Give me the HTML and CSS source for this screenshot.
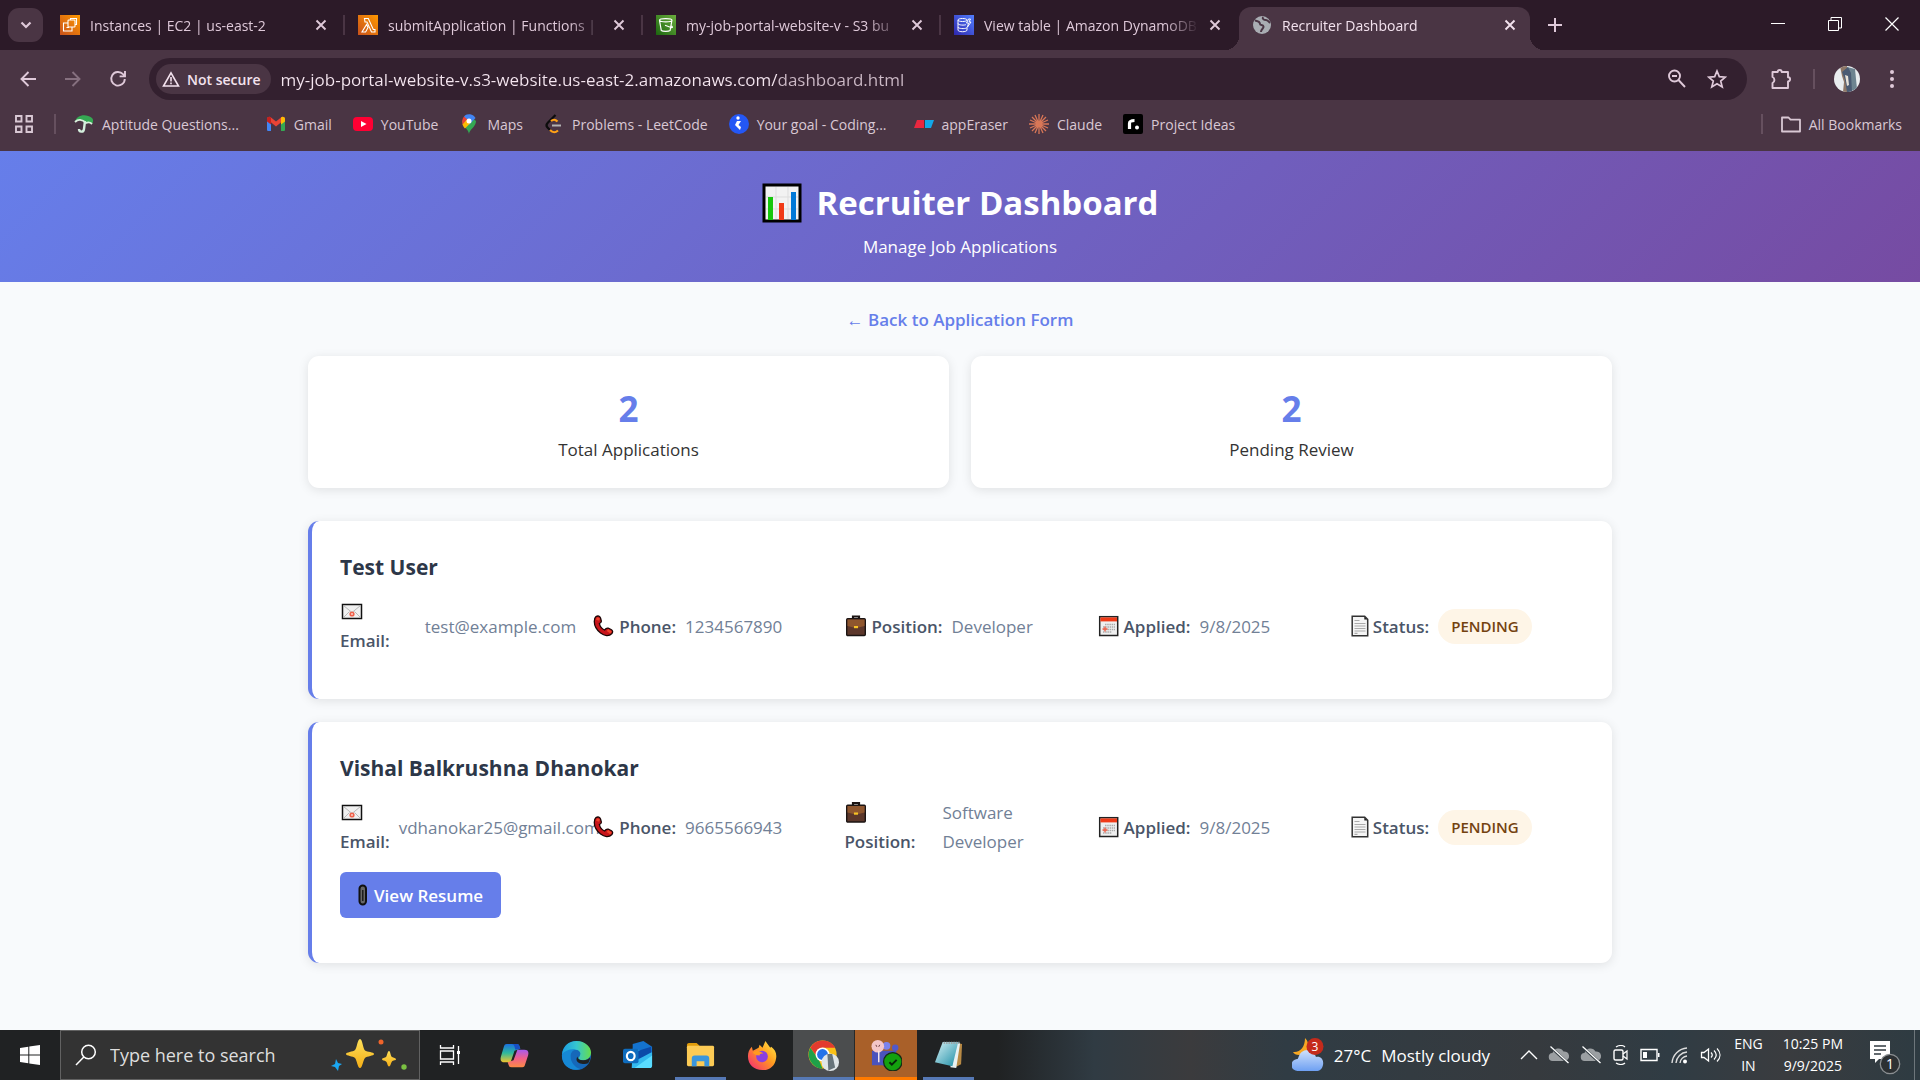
FILE: index.html
```html
<!DOCTYPE html>
<html lang="en">
<head>
<meta charset="utf-8">
<title>Recruiter Dashboard</title>
<meta name="viewport" content="width=device-width, initial-scale=1">
<link rel="stylesheet" href="styles.css">
</head>
<body>
<svg class="defs" aria-hidden="true">
  <defs>
    <linearGradient id="g-orange" x1="0" y1="1" x2="1" y2="0"><stop offset="0" stop-color="#c8511b"/><stop offset="1" stop-color="#ff9900"/></linearGradient>
    <linearGradient id="g-green" x1="0" y1="1" x2="1" y2="0"><stop offset="0" stop-color="#1b660f"/><stop offset="1" stop-color="#6cae3e"/></linearGradient>
    <linearGradient id="g-blue" x1="0" y1="1" x2="1" y2="0"><stop offset="0" stop-color="#2e27ad"/><stop offset="1" stop-color="#527fff"/></linearGradient>
    <linearGradient id="g-star" x1="0" y1="0" x2="0" y2="1"><stop offset="0" stop-color="#fde05a"/><stop offset="1" stop-color="#f5ae16"/></linearGradient>
    <linearGradient id="g-cop1" x1="0" y1="0" x2="0" y2="1"><stop offset="0" stop-color="#1a6fe0"/><stop offset=".5" stop-color="#2fb99c"/><stop offset="1" stop-color="#f2c52c"/></linearGradient>
    <linearGradient id="g-cop2" x1="0" y1="0" x2="0" y2="1"><stop offset="0" stop-color="#a55af0"/><stop offset=".5" stop-color="#f0608a"/><stop offset="1" stop-color="#fb8a45"/></linearGradient>
    <linearGradient id="g-edge" x1="0" y1="0" x2="1" y2="0"><stop offset="0" stop-color="#1b9de2"/><stop offset=".5" stop-color="#36c6cf"/><stop offset="1" stop-color="#66de4c"/></linearGradient>
    <linearGradient id="g-fox" x1="1" y1="0" x2="0" y2="1"><stop offset="0" stop-color="#fff04a"/><stop offset=".45" stop-color="#ff9a1f"/><stop offset="1" stop-color="#f5207e"/></linearGradient>
    <linearGradient id="g-note" x1="0" y1="0" x2="1" y2="1"><stop offset="0" stop-color="#d5f1f5"/><stop offset="1" stop-color="#1d8ea6"/></linearGradient>
    <linearGradient id="g-cloud" x1="0" y1="0" x2="0" y2="1"><stop offset="0" stop-color="#cfe1fc"/><stop offset="1" stop-color="#6ea0f2"/></linearGradient>
  </defs>
  <symbol id="i-close" viewBox="0 0 12 12"><path d="M1.5 1.5l9 9M10.500 1.500l-9 9" stroke="currentColor" stroke-width="1.900" fill="none"/></symbol>
  <symbol id="i-mail" viewBox="0 0 24 22"><rect x="2.500" y="4" width="19" height="14" fill="#f1f1f1" stroke="#111" stroke-width="1.500"/><path d="M3.500 5l8.500 7 8.500-7M3.500 17l6-6M20.500 17l-6-6" fill="none" stroke="#b9b9b9"/><circle cx="12" cy="13.500" r="2.600" fill="#f0614a"/><circle cx="12" cy="13.500" r="1" fill="#f9cfc8"/></symbol>
  <symbol id="i-phone" viewBox="0 0 24 22"><path d="M4 1.600c2-1.200 4-.5 4.600 1.600l.7 2.600c.3 1.500-.8 2.200-1.900 2.700.5 2.800 2.500 5.300 5.200 6.500 1-1.300 2-2.400 3.600-1.800l2.900 1.300c1.800.9 1.900 2.700.8 4-2.800 3-7.500 2.600-11.300-.4C4.600 14.900 2.300 10.700 2.300 6.500c0-2 .4-3.900 1.700-4.900z" fill="#c8151b" stroke="#1b0505" stroke-width="1.300"/><path d="M4.500 3.500l3 1M15.500 15l3.500 2.500" stroke="#f1432a" stroke-width="2.500"/></symbol>
  <symbol id="i-case" viewBox="0 0 24 22"><path d="M9 4V1.500h6V4" fill="none" stroke="#1b1413" stroke-width="2.200"/><rect x="2.700" y="3.700" width="18.600" height="16.800" rx="1" fill="#5c372b" stroke="#1b1413" stroke-width="1.400"/><path d="M3.500 4.500h17V11l-6 1.500h-5L3.500 11z" fill="#8e562e"/><rect x="10" y="11" width="4" height="2.200" fill="#f7c325"/></symbol>
  <symbol id="i-cal" viewBox="0 0 24 22"><rect x="2.700" y="1.700" width="18" height="18.800" fill="#efefef" stroke="#222" stroke-width="1.500"/><path d="M3.400 2.400h16.600v4H3.400z" fill="#f03a17"/><path d="M8 9.500h10M6 12h12M6 14.500h12M6 17h9" stroke="#aaa" stroke-width="1.500" stroke-dasharray="1.500 .7"/><path d="M5.500 14h5M8 11.500v5" stroke="#f0614a" stroke-width="1.400"/></symbol>
  <symbol id="i-page" viewBox="0 0 20 22"><path d="M2.700 1.200h12.500l3 3v16.600H2.700z" fill="#f5f5f5" stroke="#333" stroke-width="1.500"/><path d="M5 5.500h5M5 8.500h11M5 11h11M5 13.500h11M5 16h11M5 18.300h3" stroke="#aaa" stroke-width="1.200"/><path d="M14.800 1.500v3h3z" fill="#222"/></symbol>
  <symbol id="i-cloudoff" viewBox="0 0 22 20"><path d="M5 16a4 4 0 0 1-.5-8A6 6 0 0 1 15.500 6.500 4.800 4.800 0 0 1 17 16z" fill="#9b9fa2"/><path d="M2.500 2l17.500 16" stroke="#30393f" stroke-width="2.500"/><path d="M2.500 1.500l18 16.500" stroke="#fff" stroke-width="1.300"/></symbol>
</svg>

<header class="browser">
  <div class="tabstrip">
    <button class="tab-search" aria-label="Search tabs"><svg width="12" height="8" viewBox="0 0 12 8"><path d="M1.500 1.500L6 6l4.500-4.500" fill="none" stroke="currentColor" stroke-width="2.200"/></svg></button>
    <div class="tabs">
      <div class="tab">
        <svg class="fav" viewBox="0 0 20 20"><path fill="url(#g-orange)" d="M0 0h20v20H0z"/><g fill="none" stroke="#fff" stroke-width="1.100"><rect x="8" y="5" width="7" height="7" rx=".8"/><path d="M10.500 5V3.500H16.500V9.500H15M8 8H3.500v8H12v-4M6.500 12.500h2.500"/></g></svg>
        <button class="tab-title">Instances | EC2 | us-east-2</button><button class="tab-close" aria-label="Close tab"><svg><use href="#i-close"/></svg></button>
      </div>
      <div class="tab">
        <svg class="fav" viewBox="0 0 20 20"><path fill="url(#g-orange)" d="M0 0h20v20H0z"/><path d="M6.500 3.500h3.800l5 11h1.700V17h-3.500L9 7 7 7zM8.600 9.500l1.400 3L7.600 17H4z" fill="none" stroke="#fff" stroke-width="1.100"/></svg>
        <button class="tab-title">submitApplication | Functions |</button><button class="tab-close" aria-label="Close tab"><svg><use href="#i-close"/></svg></button>
      </div>
      <div class="tab">
        <svg class="fav" viewBox="0 0 20 20"><path fill="url(#g-green)" d="M0 0h20v20H0z"/><path d="M3.500 5.500l1.800 10c1.500 1.300 7.300 1.300 8.800 0l1.800-10M3.500 5.300c0-2.200 12.500-2.200 12.500 0s-12.500 2.200-12.500 0zM9 10.300l6 2.200c2.500.6 1-1.200.5-1.500" fill="none" stroke="#fff" stroke-width="1.200"/></svg>
        <button class="tab-title">my-job-portal-website-v - S3 bu</button><button class="tab-close" aria-label="Close tab"><svg><use href="#i-close"/></svg></button>
      </div>
      <div class="tab">
        <svg class="fav" viewBox="0 0 20 20"><path fill="url(#g-blue)" d="M0 0h20v20H0z"/><path d="M4 5v10c0 2.300 9 2.300 9 0v-3M4 5c0-2 9-2 9 0s-9 2-9 0zM4 8.500c0 1.800 7 2 8 1M4 12c0 1.800 7 2 8.500 1M14.500 4l-2 4h2l-1 4 3.500-5h-2l1.500-3z" fill="none" stroke="#fff"/></svg>
        <button class="tab-title">View table | Amazon DynamoDB</button><button class="tab-close" aria-label="Close tab"><svg><use href="#i-close"/></svg></button>
      </div>
      <div class="tab active">
        <svg class="fav" viewBox="0 0 20 20"><circle cx="10" cy="10" r="9" fill="#a9adb3"/><path d="M3 5.500c3 .5 5 1 5 3.500 0 1.500 3 .5 3.500 2.500S9 14 9 17M11 2c-1 2 1 3 3 3s3 2 4 3" fill="none" stroke="#4a3544" stroke-width="2"/></svg>
        <button class="tab-title">Recruiter Dashboard</button><button class="tab-close" aria-label="Close tab"><svg><use href="#i-close"/></svg></button>
      </div>
    </div>
    <button class="new-tab" aria-label="New tab"><svg width="14" height="14" viewBox="0 0 14 14"><path d="M7 0v14M0 7h14" stroke="currentColor" stroke-width="2"/></svg></button>
    <div class="window-buttons">
      <button aria-label="Minimize"><svg width="14" height="14" viewBox="0 0 14 14"><path d="M0 6.500h14" stroke="#fff"/></svg></button>
      <button aria-label="Restore"><svg width="14" height="14" viewBox="0 0 14 14"><path d="M.5 3.500h10v10H.5zM3 3.500v-3h10.500v10.500H11" fill="none" stroke="#fff"/></svg></button>
      <button aria-label="Close window"><svg width="14" height="14" viewBox="0 0 14 14"><path d="M.5.5l13 13M13.500.5l-13 13" stroke="#fff" stroke-width="1.200"/></svg></button>
    </div>
  </div>

  <div class="toolbar">
    <button aria-label="Back"><svg width="16" height="16" viewBox="0 0 16 16"><path d="M16 8H1.500M8.500 1L1.500 8l7 7" fill="none" stroke="currentColor" stroke-width="1.900"/></svg></button>
    <button class="dim" aria-label="Forward"><svg width="16" height="16" viewBox="0 0 16 16"><path d="M0 8h14.500M7.500 1l7 7-7 7" fill="none" stroke="currentColor" stroke-width="1.900"/></svg></button>
    <button aria-label="Reload"><svg width="18" height="18" viewBox="0 0 18 18"><path d="M15.800 9A6.800 6.800 0 1 1 14 4.200l2 2M16 1v5.400h-5.400" fill="none" stroke="currentColor" stroke-width="1.900"/></svg></button>
    <div class="omnibox">
      <button class="chip"><svg width="18" height="16" viewBox="0 0 18 16"><path d="M9 1.800L16.500 15h-15z" fill="none" stroke="currentColor" stroke-width="1.600"/><path d="M9 6v4.500M9 11.600v1.700" stroke="currentColor" stroke-width="1.600"/></svg>Not secure</button>
      <input class="url" type="text" aria-label="Address" value="my-job-portal-website-v.s3-website.us-east-2.amazonaws.com/dashboard.html">
      <button aria-label="Zoom"><svg width="20" height="20" viewBox="0 0 20 20"><circle cx="7.500" cy="7" r="5.500" fill="none" stroke="currentColor" stroke-width="1.900"/><path d="M5 7h5M11.500 11l6.500 7" stroke="currentColor" stroke-width="1.900"/></svg></button>
      <button aria-label="Bookmark this tab"><svg width="20" height="20" viewBox="0 0 20 20"><path d="M10 2l2.300 5.600 6 .5-4.600 3.900 1.500 5.900L10 14.700 4.800 17.900 6.300 12 1.700 8.100l6-.5z" fill="none" stroke="currentColor" stroke-width="1.700"/></svg></button>
    </div>
    <button class="ext" aria-label="Extensions"><svg width="22" height="22" viewBox="0 0 22 22"><path d="M2.500 4h5.200a2 2 0 0 1 4 0h6.300v5.200a2 2 0 0 1 0 4.200V20H2.500v-5a3.300 3.300 0 0 0 0-6z" fill="none" stroke="currentColor" stroke-width="1.900" stroke-linejoin="round"/></svg></button>
    <span class="rule"></span>
    <button class="profile" aria-label="Profile"><svg width="26" height="26" viewBox="0 0 26 26"><clipPath id="av"><circle cx="13" cy="13" r="13"/></clipPath><g clip-path="url(#av)"><path fill="#e9edef" d="M0 0h26v26H0z"/><path fill="#6d8490" d="M13 1l8 2 2 20-9 3z"/><path fill="#8e7766" d="M6 0h7v8l-1 5 3 13H9l1-10-2-6z"/><path fill="#4a5b73" d="M8 6l6-5 3 6 1 19h-5l-2-12z"/><path fill="#e8e2d8" d="M11 9l3 1 1 9-2 1z"/></g></svg></button>
    <button class="menu" aria-label="Menu"><svg width="6" height="20" viewBox="0 0 6 20"><g fill="currentColor"><circle cx="3" cy="3" r="2"/><circle cx="3" cy="10" r="2"/><circle cx="3" cy="17" r="2"/></g></svg></button>
  </div>

  <nav class="bookmarks" aria-label="Bookmarks">
    <button class="apps" aria-label="Apps"><svg width="18" height="18" viewBox="0 0 18 18"><path d="M1 1h5.500v5.500H1zM11.500 1H17v5.500h-5.500zM1 11.500h5.500V17H1zM11.500 11.500H17V17h-5.500z" fill="none" stroke="currentColor" stroke-width="1.900"/></svg></button>
    <span class="rule"></span>
    <a href="#" class="cut"><svg viewBox="0 0 20 20"><path d="M1 8C2 1 12-1 18 4c1.500 1.500 1.500 4 0 6-2-2-4-2-6-1C9 5 4 5 1 8z" fill="#35a853"/><path d="M1 8c3-3 7-3 11 1 2-1 4-1 6 1" fill="none" stroke="#d9efdc" stroke-width="1.800"/><path d="M11 7l-1 8c-.5 4-5 3-5 0" fill="none" stroke="#d4eedd" stroke-width="2.400"/></svg>Aptitude Questions...</a>
    <a href="#"><svg viewBox="0 0 20 20"><path fill="#4285f4" d="M1 5h4v12H2.500C1.500 17 1 16.500 1 15.500z"/><path fill="#34a853" d="M15 5h4v10.500c0 1-.5 1.500-1.500 1.500H15z"/><path fill="#ea4335" d="M1 5c0-2 2.500-3 4-1.500L10 7.500l5-4C16.500 2 19 3 19 5l-9 7.500z"/><path fill="#fbbc04" d="M15 3.500C16.500 2 19 3 19 5v2.500l-4 3z"/><path fill="#c5221f" d="M1 5c0-2 2.500-3 4-1.500v7L1 7.500z"/></svg>Gmail</a>
    <a href="#"><svg viewBox="0 0 20 20"><rect y="3" width="20" height="14" rx="4" fill="#ff0033"/><path d="M8 7l5.500 3L8 13z" fill="#fff"/></svg>YouTube</a>
    <a href="#"><svg viewBox="0 0 20 20"><path fill="#34a853" d="M10 20C9.500 15 3 12 3 7l7-6 7 6c0 6-6.500 8-7 13z"/><path fill="#4285f4" d="M5 2.500A7 7 0 0 1 16.500 4L10 11 5 2.500z"/><path fill="#ea4335" d="M5 2.500L9 6 4 11.500C2.500 8.500 3 5 5 2.500z"/><path fill="#fbbc04" d="M3.500 10.500L8 5.500l4 3-6 6c-1-1-2-2.500-2.500-4z"/><circle cx="10" cy="7" r="2.500" fill="#fff"/></svg>Maps</a>
    <a href="#"><svg viewBox="0 0 20 20"><path d="M11.500 1L4 8.500c-2 2-2 3.500-.5 5L6 16" fill="none" stroke="#0c0c0c" stroke-width="2.200"/><path d="M6 16c3 3 5 3 8 .5M7 7c2.500-2 4-2 6.500.5" fill="none" stroke="#ffa116" stroke-width="2.200"/><path d="M8 11.500h9" stroke="#b3b3b3" stroke-width="2"/></svg>Problems - LeetCode</a>
    <a href="#" class="cut"><svg viewBox="0 0 20 20"><circle cx="10" cy="10" r="10" fill="#2457f5"/><path d="M8 7l-2 4 5 5 1-3-2.500-2L12 7z" fill="#fff"/><circle cx="9" cy="4" r="1.700" fill="#fff"/></svg>Your goal - Coding...</a>
    <a href="#"><svg viewBox="0 0 20 20"><path fill="#e8273f" d="M3 6h7v8H0z"/><path fill="#12a7e8" d="M11 6h9l-3 8h-6z"/></svg>appEraser</a>
    <a href="#"><svg viewBox="0 0 20 20"><path d="M10 0v20M0 10h20M3 3l14 14M17 3L3 17M6 1l8 18M14 1L6 19M1 6l18 8M1 14l18-8" stroke="#d97757" stroke-width="1.300"/></svg>Claude</a>
    <a href="#"><svg viewBox="0 0 20 20"><rect width="20" height="20" rx="2" fill="#000"/><path d="M6.500 15V9.500C6.500 7 8 6.500 11.500 6.500" fill="none" stroke="#fff" stroke-width="3.200"/><circle cx="14" cy="13.500" r="2" fill="#fff"/></svg>Project Ideas</a>
    <span class="rule push"></span>
    <a href="#" class="all"><svg viewBox="0 0 20 20"><path d="M1 3.500h6.500l2 2.200H19v11.800H1z" fill="none" stroke="currentColor" stroke-width="1.800" stroke-linejoin="round"/></svg>All Bookmarks</a>
  </nav>
</header>

<main class="page">
  <section class="hero">
    <h1><svg width="40" height="40" viewBox="0 0 40 40"><rect x="2" y="2" width="36" height="36" fill="#f2f2f2" stroke="#000" stroke-width="3"/><path d="M4 14h32M4 26h32M14 4v32M26 4v32" stroke="#ddd"/><path fill="#16c60c" d="M6 14h5v23H6z"/><path fill="#f03a17" d="M17 20h5v17h-5z"/><path fill="#0078d7" d="M29 9h5v28h-5z"/></svg>Recruiter Dashboard</h1>
    <p>Manage Job Applications</p>
  </section>
  <div class="container">
    <a class="back" href="#">← Back to Application Form</a>
    <section class="stats">
      <div class="stat"><div class="number">2</div><div>Total Applications</div></div>
      <div class="stat"><div class="number">2</div><div>Pending Review</div></div>
    </section>

    <article class="application">
      <h2>Test User</h2>
      <div class="details">
        <div class="field spread"><span class="label stacked"><svg><use href="#i-mail"/></svg>Email:</span><span>test@example.com</span></div>
        <div class="field"><span class="label"><svg><use href="#i-phone"/></svg>Phone:</span><span>1234567890</span></div>
        <div class="field"><span class="label"><svg><use href="#i-case"/></svg>Position:</span><span>Developer</span></div>
        <div class="field"><span class="label"><svg><use href="#i-cal"/></svg>Applied:</span><span>9/8/2025</span></div>
        <div class="field"><span class="label"><svg class="narrow"><use href="#i-page"/></svg>Status:</span><span class="pill">PENDING</span></div>
      </div>
    </article>

    <article class="application">
      <h2>Vishal Balkrushna Dhanokar</h2>
      <div class="details">
        <div class="field"><span class="label stacked"><svg><use href="#i-mail"/></svg>Email:</span><span>vdhanokar25@gmail.com</span></div>
        <div class="field"><span class="label"><svg><use href="#i-phone"/></svg>Phone:</span><span>9665566943</span></div>
        <div class="field"><span class="label stacked wide"><svg><use href="#i-case"/></svg>Position:</span><span>Software<br>Developer</span></div>
        <div class="field"><span class="label"><svg><use href="#i-cal"/></svg>Applied:</span><span>9/8/2025</span></div>
        <div class="field"><span class="label"><svg class="narrow"><use href="#i-page"/></svg>Status:</span><span class="pill">PENDING</span></div>
      </div>
      <button class="resume"><svg width="10" height="22" viewBox="0 0 10 22"><rect x="1.500" y="1.500" width="6.500" height="19" rx="3.200" fill="#666" stroke="#111" stroke-width="2"/><path d="M4.800 6v11" stroke="#111" stroke-width="1.300"/></svg>View Resume</button>
    </article>
  </div>
</main>

<footer class="taskbar">
  <button class="start" aria-label="Start"><svg width="20" height="20" viewBox="0 0 20 20"><path fill="#fff" d="M0 3l8.300-1.200v7.700H0zM9.300 1.600L20 0v9.500H9.300zM0 10.500h8.300v7.700L0 17zM9.300 10.500H20V20L9.300 18.400z"/></svg></button>
  <label class="search">
    <svg width="22" height="22" viewBox="0 0 22 22"><circle cx="13.500" cy="8" r="6.800" fill="none" stroke="#fff" stroke-width="1.500"/><path d="M8.800 13L1 21" stroke="#fff" stroke-width="1.500"/></svg>
    <input type="text" placeholder="Type here to search" aria-label="Type here to search">
    <svg width="76" height="32" viewBox="0 0 76 32"><path fill="url(#g-star)" d="M29 0c2.500 0 3 10 5 11.500S43 13 43 15s-7 2-9 4-2.500 10-5 10-3-8-5-10-9-2-9-4 7-2 9-4 2.500-11 5-11z"/><path fill="url(#g-star)" d="M58 12c1.500 0 1.500 5 3 6s4 1 4 2.200-3 1-4 2.200-1.500 5-3 5-1.500-4-3-5-4-1-4-2.200 3-1.200 4-2.200 1.500-6 3-6z"/><path fill="#1ba7f2" d="M5 20l2 4 4 1-3 2-1 5-3-4-4-1 4-2z"/><circle cx="50" cy="3" r="2.500" fill="#f0642b"/><circle cx="73" cy="28" r="2.700" fill="#7bc142"/></svg>
  </label>
  <div class="apps-row">
    <button class="view" aria-label="Task view"><svg width="22" height="20" viewBox="0 0 22 20"><path d="M1.500 0v3h13V0M1.500 20v-3h13v3M1.500 6h13v8h-13zM19.500 1v18" fill="none" stroke="#fff" stroke-width="1.300"/><path fill="#fff" d="M18 6h3v3h-3z"/></svg></button>
    <button aria-label="Copilot"><svg viewBox="0 0 32 32"><path fill="url(#g-cop1)" d="M8 4h10c3 0 3 2 4 5l-6 2-4 12H6c-4 0-5-2-4-6L5 7c.5-2 1-3 3-3z"/><path fill="#174fc4" d="M13 4h5c3 0 3 2 4 5l-5 1c-1-3-1-6-4-6z"/><path fill="url(#g-cop2)" d="M24 28H13c-3 0-3-2-4-5l6-2 4-11h7c4 0 5 2 4 6l-3 9c-.5 2-1 3-3 3z"/></svg></button>
    <button aria-label="Edge"><svg viewBox="0 0 32 32"><circle cx="16" cy="16" r="15" fill="#1668b9"/><path d="M1 15C2 6 8 1 16 1c9 0 15 6 15 12 0 5-4 8-8 8-3 0-5-1-5-2s2-2 2-5c0-2-2-4-5-4C9 10 4 12 1 15z" fill="url(#g-edge)"/><path d="M1 15c4-5 10-6 14-5-4 1-5 4-5 7 0 6 4 11 10 13C10 33 0 26 1 15z" fill="#1688d5"/><path d="M17 17c0 2 2 4 6 4s6-2 7-3c0 3-1 4-2 6-4 2-12 0-12-4 0-1 .3-2 1-3z" fill="#202223"/></svg></button>
    <button aria-label="Outlook"><svg viewBox="0 0 32 32"><path fill="#1473ce" d="M10 4l11-3 9 6v10L10 20z"/><path fill="#33b9ee" d="M10 9l20 4v13c0 2-1 3-3 3H9z"/><path fill="#0b4aa8" d="M10 13l19-6v6L10 23z"/><path fill="#59dcff" d="M12 29l18-13v10c0 2-1 3-3 3z"/><rect y="9" width="16" height="15" rx="2" fill="#0f6cbd"/><ellipse cx="8" cy="16.500" rx="4" ry="4.300" fill="none" stroke="#fff" stroke-width="2.200"/></svg></button>
    <button class="open" aria-label="File Explorer"><svg viewBox="0 0 32 32"><path fill="#e09c0b" d="M2 5c0-1 1-2 2-2h8l3 3v5H2z"/><rect x="2" y="6" width="28" height="21" rx="1.500" fill="#fccb55"/><path fill="#3a96dd" d="M7 27v-8c0-2 1-3 3-3h12c2 0 3 1 3 3v8h-5v-5h-8v5z"/></svg></button>
    <button aria-label="Firefox"><svg viewBox="0 0 32 32"><path fill="url(#g-fox)" d="M16 31C7 31 1 25 1 17c0-4 1-7 4-10l1 4 6-3 1-3 3 3 3-7 5 7 1-1c4 3 6 7 5 12-1 7-6 12-13 12z"/><circle cx="15.500" cy="17" r="6" fill="#8a3fe0"/><path fill="#ff9a1f" d="M6 13c4-3 8-1 11 1-2 0-4 0-4 2-3 0-6-1-7-3z"/></svg></button>
    <button class="open current" aria-label="Chrome"><svg viewBox="0 0 32 32"><circle cx="15" cy="15" r="14.500" fill="#fbc116"/><path fill="#e33b2e" d="M2.500 8A14.500 14.500 0 0 1 28 8H15l-6 9z"/><path fill="#1fa049" d="M2.500 8L11 20l4 9.500A14.500 14.500 0 0 1 2.500 8z"/><circle cx="15" cy="15" r="7.200" fill="#fff"/><circle cx="15" cy="15" r="5.600" fill="#2473e8"/><circle cx="23" cy="23" r="9" fill="#dfe5e7"/><path fill="#67747a" d="M20 14.500h5l3 14-7 3z"/></svg></button>
    <button class="open alert" aria-label="Teams"><svg viewBox="0 0 32 32"><circle cx="16" cy="6" r="4" fill="#7b83eb"/><circle cx="25" cy="8" r="3.300" fill="#5059c9"/><path fill="#4b53bc" d="M1 11h25v9a9 9 0 0 1-14 6H1z"/><circle cx="7" cy="6.500" r="6.500" fill="#f4c6c8"/><path d="M8 11v12" stroke="#f4e9ea" stroke-width="1.500"/><path d="M5 5l1 2M9 5L8 7" stroke="#6a3a3d"/><circle cx="22.500" cy="22.500" r="9.500" fill="#13a10e" stroke="#172b16" stroke-width="1.300"/><path d="M19 23l2.500 2.500 5-5" fill="none" stroke="#06270a" stroke-width="2"/></svg></button>
    <button class="open" aria-label="Notepad"><svg viewBox="0 0 32 32"><path fill="#b88a45" d="M24 3l6 1-1 21-6 3z"/><path fill="#e9f1f2" d="M20 3h8l-4 26-6-1z"/><path fill="url(#g-note)" d="M10 2h16l-6 25L2 23z"/><path d="M11 3h17" stroke="#9ba5a7" stroke-width="2.500" stroke-dasharray="1.500 1"/></svg></button>
  </div>
  <div class="tray">
    <button class="weather"><svg width="32" height="36" viewBox="0 0 32 36"><path fill="#f7a823" d="M13 1c6 6 4 15-6 17-3 0-5-1-6-3 7 1 12-5 12-14z"/><path fill="url(#g-cloud)" d="M6 34a6 6 0 0 1-1-12c1 0 1-.5 1.500-2A9 9 0 0 1 24 20c5-1 8 3 7 8-1 4-3 6-7 6z"/><circle cx="23" cy="9.500" r="8.500" fill="#c42b1c"/><text x="23" y="14" text-anchor="middle" fill="#fff" font-size="12">3</text></svg><span>27°C</span><span>Mostly cloudy</span></button>
    <div class="icons">
      <svg width="18" height="20" viewBox="0 0 18 20"><path d="M1 14l8-8 8 8" fill="none" stroke="#fff" stroke-width="1.400"/></svg>
      <svg width="22" height="20"><use href="#i-cloudoff"/></svg>
      <svg width="22" height="20"><use href="#i-cloudoff"/></svg>
      <svg width="18" height="20" viewBox="0 0 18 20"><rect x="2" y="5" width="9" height="10" rx="1.500" fill="none" stroke="#fff" stroke-width="1.400"/><path d="M11 9l4-3v8l-4-3M4 2c3-2 7-2 9 0M4 18c3 2 7 2 9 0" fill="none" stroke="#fff" stroke-width="1.200"/></svg>
      <svg width="20" height="20" viewBox="0 0 20 20"><path d="M1 4.500h16v11H1z" fill="none" stroke="#fff" stroke-width="1.400"/><path fill="#fff" d="M3 7h4v6H3zM18 8h1.500v4H18z"/></svg>
      <svg width="20" height="20" viewBox="0 0 20 20"><path d="M2 18A16 16 0 0 1 17 3M6 18A12 12 0 0 1 17 7M10 18a8 8 0 0 1 7-7" fill="none" stroke="#ddd" stroke-width="1.400"/><circle cx="15" cy="16.500" r="2" fill="#fff"/></svg>
      <svg width="22" height="20" viewBox="0 0 22 20"><path d="M1.500 7.500H4L8.500 4v12L4 12.500H1.500z" fill="none" stroke="#fff" stroke-width="1.300"/><path d="M11 7.500c1.500 1.500 1.500 3.500 0 5M14 5.500c3 3 3 6 0 9M17 3.500c4 4 4 9 0 13" fill="none" stroke="#fff" stroke-width="1.200"/></svg>
    </div>
    <div class="lang"><span>ENG</span><span>IN</span></div>
    <div class="clock"><span>10:25 PM</span><span>9/9/2025</span></div>
    <button class="notify" aria-label="1 notification"><svg width="32" height="36" viewBox="0 0 32 36"><path fill="#fff" d="M1 2h20v18H10l-4 4v-4H1z"/><path d="M5 7h12M5 11h12M5 15h7" stroke="#303a40" stroke-width="1.500"/><circle cx="21" cy="25" r="9.700" fill="#2c3033" stroke="#8b8f92" stroke-width="1.300"/><text x="21" y="30" text-anchor="middle" fill="#fff" font-size="14">1</text></svg></button>
  </div>
</footer>
</body>
</html>
```
FILE: styles.css
```css
* { box-sizing: border-box; }

body {
  margin: 0;
  min-height: 100vh;
  display: flex;
  flex-direction: column;
  font-family: "Open Sans", "Noto Sans", sans-serif;
  font-size: 17px;
  background: #f8fafc;
}

button, input { font: inherit; color: inherit; }
button { padding: 0; border: 0; background: none; }
a { color: inherit; text-decoration: none; }
svg { display: block; flex: none; }
.defs { position: absolute; width: 0; height: 0; }

/* Browser frame */
.browser { background: #4a3544; color: #dfc9d9; font-size: 14px; }

.tabstrip { display: flex; height: 50px; background: #2c1a28; }
.tab-search {
  width: 35px; height: 34px; margin: 8px 4px 0 8px; flex: none;
  border-radius: 11px; background: #4a3544;
  display: grid; place-items: center;
}
.tabs { display: flex; flex: 0 1 1483px; min-width: 0; }
.tab {
  position: relative;
  flex: 1 1 298px; min-width: 0;
  display: flex; align-items: center; gap: 10px;
  padding: 0 18px 0 13px;
}
.tab:nth-child(-n+3)::after {
  content: ""; position: absolute; right: 0; top: 15px;
  width: 2px; height: 20px; background: #4a3544;
}
.fav { width: 20px; height: 20px; }
.tab-title {
  flex: 1; min-width: 0; overflow: hidden; white-space: nowrap; text-align: left;
  mask-image: linear-gradient(90deg, #000 84%, transparent);
}
.tab-close { width: 12px; height: 12px; }
.tab-close svg { width: 12px; height: 12px; }
.tab.active {
  flex-basis: 291px;
  margin-top: 7px; padding-bottom: 7px; padding-right: 14px; color: #f3e2ee;
  background: #4a3544; border-radius: 12px 12px 0 0;
}
.tab.active::before, .tab.active::after {
  content: ""; position: absolute; bottom: 0; width: 14px; height: 14px;
}
.tab.active::before { left: -14px; background: radial-gradient(circle at 0 0, #2c1a28 14px, #4a3544 14px); }
.tab.active::after { right: -14px; background: radial-gradient(circle at 100% 0, #2c1a28 14px, #4a3544 14px); }
.new-tab { width: 50px; height: 50px; display: grid; place-items: center; }
.window-buttons { margin-left: auto; display: flex; }
.window-buttons button { width: 57px; height: 48px; display: grid; place-items: center; }

.toolbar { display: flex; align-items: center; height: 58px; padding: 0 15px 0 5px; }
.toolbar > button { width: 45px; height: 40px; flex: none; display: grid; place-items: center; }
.toolbar .dim { color: #86707f; }
.omnibox {
  flex: 1; min-width: 0; height: 42px; margin-left: 9px; padding: 0 10px 0 7px;
  display: flex; align-items: center;
  border-radius: 21px; background: #33202f;
}
.omnibox > button:not(.chip) { width: 40px; height: 40px; display: grid; place-items: center; }
.chip {
  height: 30px; padding: 0 10px 0 6px; margin-right: 10px; flex: none;
  display: flex; align-items: center; gap: 7px;
  border-radius: 15px; background: #4a3544; font-weight: 600; color: #f3e2ee;
}
.url {
  flex: 1; min-width: 0; padding: 0; border: 0; outline: 0; font-size: 17px;
  color: transparent;
  background: linear-gradient(90deg, #f5e6f0 497px, #cdbac7 497px);
  -webkit-background-clip: text; background-clip: text;
}
.rule { width: 2px; height: 20px; flex: none; background: #66505f; }
.toolbar .ext { margin: 0 10px 0 11px; }
.toolbar .profile { width: 64px; }
.toolbar .menu { width: 26px; }

.bookmarks { display: flex; align-items: center; gap: 21px; height: 43px; padding: 0 18px 11px 15px; white-space: nowrap; color: #d9c8d4; }
.bookmarks a { display: flex; align-items: center; gap: 8px; }
.bookmarks a svg { width: 20px; height: 20px; }
.bookmarks .cut { padding-right: 6px; }
.bookmarks .rule { margin-right: -3px; }
.bookmarks .push { margin-left: auto; }

/* Dashboard page */
.page { flex: 1; color: #333; line-height: 29px; }
.hero {
  padding: 22px; text-align: center; color: #fff;
  background: linear-gradient(135deg, #667eea 0%, #764ba2 100%);
}
.hero h1 { margin: 0; display: flex; justify-content: center; align-items: center; gap: 15px; font-size: 33px; line-height: 60px; }
.hero p { margin: 0; line-height: 27px; }

.container { max-width: 1304px; margin: 0 auto; padding-bottom: 40px; }
.back { display: block; margin: 23px auto 22px; width: max-content; color: #667eea; font-weight: 600; }
.stats { display: grid; grid-template-columns: 1fr 1fr; gap: 22px; margin-bottom: 33px; }
.stat, .application { background: #fff; border-radius: 11px; box-shadow: 0 2px 11px rgba(0, 0, 0, .1); }
.stat { padding: 27px 24px 23px; line-height: 30px; text-align: center; }
.number { font-size: 35px; line-height: 52px; font-weight: 700; color: #667eea; }

.application { margin-bottom: 23px; padding: 27px 27px 28px 28px; border-left: 4px solid #667eea; }
.application h2 { margin: 0 0 11px; font-size: 21px; line-height: 38px; font-weight: 700; color: #2d3748; }
.details { display: grid; grid-template-columns: repeat(5, minmax(0, 1fr)); gap: 16px; margin-bottom: 16px; color: #718096; }
.field { min-height: 58px; display: flex; align-items: center; gap: 9px; white-space: nowrap; }
.spread { justify-content: space-between; }
.label { display: flex; align-items: center; gap: 3px; font-weight: 600; color: #4a5568; }
.label svg { width: 24px; height: 22px; }
.label .narrow { width: 21px; }
.label.stacked { flex-direction: column; align-items: flex-start; gap: 0; }
.label.stacked svg { height: 29px; }
.label.wide { min-width: 89px; }
.pill { padding: 0 13px; border-radius: 18px; background: #fef5e7; color: #744210; font-size: 15px; line-height: 35px; font-weight: 600; }
.resume {
  height: 46px; margin-bottom: 18px; padding: 0 18px; display: flex; align-items: center; gap: 6px;
  border-radius: 6px; background: #667eea; color: #fff; font-weight: 600;
}
.application:last-child { padding-bottom: 27px; }

/* Desktop taskbar */
.taskbar {
  display: flex; height: 50px; color: #fff;
  background: linear-gradient(90deg, #202223 0, #202223 52%, #303b43 57%, #3b3b3d 62%, #303c44 67%, #363a3e 80%, #303c44 87%, #3a3c3f 93%, #2e3b42 100%);
}
.start { width: 60px; flex: none; display: grid; place-items: center; }
.search { width: 360px; display: flex; align-items: center; padding: 0 12px 0 14px; background: #333; border: 1px solid #626262; }
.search input { flex: 1; min-width: 0; margin-left: 13px; padding: 0; border: 0; outline: 0; background: none; font-size: 18px; }
.search input::placeholder { color: #dedede; opacity: 1; }
.apps-row { display: flex; }
.apps-row button { width: 62px; display: grid; place-items: center; }
.apps-row .view { width: 63px; padding-right: 3px; }
.apps-row button:not(.view) svg { width: 31px; height: 31px; }
.apps-row .open { background: linear-gradient(#5679b5, #5679b5) center bottom / 51px 3px no-repeat; }
.apps-row .current { background: linear-gradient(#5679b5, #5679b5) center bottom / 100% 3px no-repeat, #4b4d4e; border-right: 1px solid #27292a; }
.apps-row .alert { background: linear-gradient(#ff7a00, #ff7a00) center bottom / 100% 3px no-repeat, #a96029; }
.tray { margin: 0 5px 0 auto; display: flex; align-items: center; white-space: nowrap; border-right: 1px solid #6d767b; }
.weather { display: flex; align-items: center; gap: 10px; font-size: 17px; }
.icons { display: flex; align-items: center; gap: 10px; margin-left: 30px; }
.lang, .clock { display: flex; flex-direction: column; align-items: center; font-size: 14px; line-height: 22px; }
.lang { margin-left: 12px; }
.clock { margin-left: 20px; }
.notify { margin: 4px 8px 0 26px; padding-right: 5px; }
```
